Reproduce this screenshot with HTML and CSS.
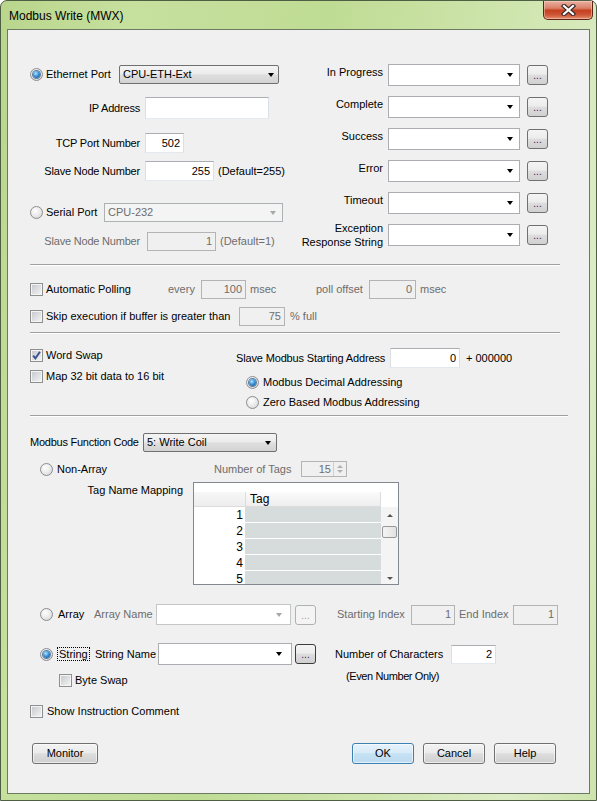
FILE: index.html
```html
<!DOCTYPE html>
<html lang="en">

<head>
    <meta charset="UTF-8">
    <meta name="viewport" content="width=device-width, initial-scale=1.0">
    <link rel="stylesheet" href="styles.css">
    <title>Modbus Write (MWX)</title>
</head>

<body>
    <div class="window">
        <div class="titlebar">
            <span class="title">Modbus Write (MWX)</span>
            <span class="close">
                <svg width="15" height="12" viewBox="0 0 15 12">
                    <path d="M3 2 L12 10 M12 2 L3 10" stroke="#3a2b2b" stroke-width="4.4" stroke-linecap="square" fill="none"/>
                    <path d="M3 2 L12 10 M12 2 L3 10" stroke="#fff" stroke-width="2.2" stroke-linecap="square" fill="none"/>
                </svg>
            </span>
        </div>

        <div class="client">
            <!-- Port settings and status bits -->
            <div class="ports">
                <div class="port-col">
                    <div class="row eth-row">
                        <span class="radio on"></span>
                        <span class="opt eth-lbl">Ethernet Port</span>
                        <div class="combo raised eth-combo"><span>CPU-ETH-Ext</span><i class="arrow"></i></div>
                    </div>
                    <div class="row ip-row">
                        <label class="lbl">IP Address</label>
                        <div class="field ip-field"></div>
                    </div>
                    <div class="row tcp-row">
                        <label class="lbl">TCP Port Number</label>
                        <div class="field num tcp-field">502</div>
                    </div>
                    <div class="row node-row">
                        <label class="lbl">Slave Node Number</label>
                        <div class="field num node-field">255</div>
                        <span class="note">(Default=255)</span>
                    </div>
                    <div class="row serial-row">
                        <span class="radio"></span>
                        <span class="opt serial-lbl">Serial Port</span>
                        <div class="combo off serial-combo"><span>CPU-232</span><i class="arrow"></i></div>
                    </div>
                    <div class="row node2-row dim">
                        <label class="lbl">Slave Node Number</label>
                        <div class="field num off node2-field">1</div>
                        <span class="note">(Default=1)</span>
                    </div>
                </div>

                <div class="bits-col">
                    <div class="bit-row">
                        <label class="bit-lbl">In Progress</label>
                        <div class="combo bit-combo"><i class="arrow"></i></div>
                        <span class="dots">...</span>
                    </div>
                    <div class="bit-row">
                        <label class="bit-lbl">Complete</label>
                        <div class="combo bit-combo"><i class="arrow"></i></div>
                        <span class="dots">...</span>
                    </div>
                    <div class="bit-row">
                        <label class="bit-lbl">Success</label>
                        <div class="combo bit-combo"><i class="arrow"></i></div>
                        <span class="dots">...</span>
                    </div>
                    <div class="bit-row">
                        <label class="bit-lbl">Error</label>
                        <div class="combo bit-combo"><i class="arrow"></i></div>
                        <span class="dots">...</span>
                    </div>
                    <div class="bit-row">
                        <label class="bit-lbl">Timeout</label>
                        <div class="combo bit-combo"><i class="arrow"></i></div>
                        <span class="dots">...</span>
                    </div>
                    <div class="bit-row">
                        <label class="bit-lbl two-line">Exception<br>Response String</label>
                        <div class="combo bit-combo"><i class="arrow"></i></div>
                        <span class="dots">...</span>
                    </div>
                </div>
            </div>

            <hr class="sep sep-top">

            <!-- Polling -->
            <div class="poll">
                <div class="row poll-row">
                    <label class="chk poll-chk"><span class="check"></span>Automatic Polling</label>
                    <span class="dim every-lbl">every</span>
                    <div class="field num off every-field">100</div>
                    <span class="dim msec-lbl">msec</span>
                    <span class="dim offset-lbl">poll offset</span>
                    <div class="field num off offset-field">0</div>
                    <span class="dim msec2-lbl">msec</span>
                </div>
                <div class="row skip-row">
                    <label class="chk skip-chk"><span class="check"></span>Skip execution if buffer is greater than</label>
                    <div class="field num off skip-field">75</div>
                    <span class="dim full-lbl">% full</span>
                </div>
            </div>

            <hr class="sep sep-mid">

            <!-- Addressing -->
            <div class="swap">
                <div class="swap-left">
                    <label class="chk swap-chk">
                        <span class="check on"><svg width="11" height="11" viewBox="0 0 11 11"><path d="M2.2 5.6 L4.4 8.4 L9 1.8" stroke="#3d5191" stroke-width="1.9" fill="none"/></svg></span>Word Swap
                    </label>
                    <label class="chk map-chk"><span class="check"></span>Map 32 bit data to 16 bit</label>
                </div>
                <div class="swap-right">
                    <div class="row addr-row">
                        <label class="addr-lbl">Slave Modbus Starting Address</label>
                        <div class="field num addr-field">0</div>
                        <span class="plus">+ 000000</span>
                    </div>
                    <label class="opt-row dec-row"><span class="radio on"></span>Modbus Decimal Addressing</label>
                    <label class="opt-row zero-row"><span class="radio"></span>Zero Based Modbus Addressing</label>
                </div>
            </div>

            <hr class="sep sep-low">

            <!-- Function code and tags -->
            <div class="func">
                <div class="row fc-row">
                    <label class="fc-lbl">Modbus Function Code</label>
                    <div class="combo raised fc-combo"><span>5: Write Coil</span><i class="arrow"></i></div>
                </div>

                <div class="row na-row">
                    <span class="radio"></span>
                    <span class="na-lbl">Non-Array</span>
                    <span class="dim tags-lbl">Number of Tags</span>
                    <div class="spin">
                        <span class="spin-val">15</span>
                        <span class="spin-btns"><i class="up"></i><i class="down"></i></span>
                    </div>
                </div>

                <div class="row map-row">
                    <label class="map-lbl">Tag Name Mapping</label>
                    <div class="grid">
                        <div class="ghead">
                            <div class="gh-num"></div>
                            <div class="gh-tag"><span>Tag</span></div>
                            <div class="gh-blank"></div>
                        </div>
                        <div class="gbody">
                            <div class="gnums">
                                <div>1</div><div>2</div><div>3</div><div>4</div><div>5</div>
                            </div>
                            <div class="gtags">
                                <div></div><div></div><div></div><div></div><div></div>
                            </div>
                            <div class="gscroll">
                                <span class="sb-btn"><i class="sb-up"></i></span>
                                <span class="sb-thumb"></span>
                                <span class="sb-btn sb-end"><i class="sb-down"></i></span>
                            </div>
                        </div>
                    </div>
                </div>

                <div class="row arr-row">
                    <span class="radio"></span>
                    <span class="arr-lbl">Array</span>
                    <span class="dim arrname-lbl">Array Name</span>
                    <div class="combo arr-combo"><i class="arrow grey"></i></div>
                    <span class="dots off">...</span>
                    <span class="dim start-lbl">Starting Index</span>
                    <div class="field num off idx-field">1</div>
                    <span class="dim end-lbl">End Index</span>
                    <div class="field num off end-field">1</div>
                </div>

                <div class="row str-row">
                    <span class="radio on"></span>
                    <span class="str-lbl"><span class="focus">String</span></span>
                    <span class="strname-lbl">String Name</span>
                    <div class="combo str-combo"><i class="arrow"></i></div>
                    <span class="dots focus-btn">...</span>
                    <span class="chars-lbl">Number of Characters</span>
                    <div class="field num chars-field">2</div>
                </div>

                <div class="row byte-row">
                    <label class="chk byte-chk"><span class="check"></span>Byte Swap</label>
                    <span class="even-lbl">(Even Number Only)</span>
                </div>
            </div>

            <label class="chk show-chk"><span class="check"></span>Show Instruction Comment</label>

            <div class="actions">
                <button class="btn monitor-btn">Monitor</button>
                <button class="btn default ok-btn">OK</button>
                <button class="btn cancel-btn">Cancel</button>
                <button class="btn help-btn">Help</button>
            </div>
        </div>
    </div>
</body>

</html>
```

FILE: styles.css
```css
* {
  box-sizing: border-box;
}

body {
  margin: 0;
  font-family: "Liberation Sans", Arial, sans-serif;
  font-size: 11px;
  line-height: 13px;
  color: #000;
  background: #fff;
  white-space: nowrap;
}

/* window frame */
.window {
  width: 597px;
  height: 801px;
  padding: 0 6px 6px;
  border: 1px solid #4f5f43;
  border-radius: 7px 7px 0 0;
  background: linear-gradient(100deg, #b9d68c 0%, #c6e09e 18%, #bfdc94 45%, #cfe5ae 70%, #dcecc5 88%, #cde3ac 100%);
}

.titlebar {
  height: 28px;
  display: flex;
  justify-content: space-between;
  align-items: flex-start;
}

.title {
  padding: 8px 0 0 2px;
  font-size: 12px;
  line-height: 15px;
}

.close {
  width: 50px;
  height: 19px;
  margin-right: -3px;
  border: 1px solid #5c2418;
  border-top: 0;
  border-radius: 0 0 5px 5px;
  background: linear-gradient(#eab0a2, #d98068 40%, #c4401f 52%, #cf5737 78%, #e3916f);
  box-shadow: inset 0 0 0 1px rgba(255, 220, 210, 0.45);
  display: flex;
  align-items: center;
  justify-content: center;
}

.client {
  height: 765px;
  border: 1px solid #6c7a62;
  background: #f0f0f0;
  padding-left: 22px;
}

/* shared controls */
.row {
  display: flex;
  align-items: center;
}

.dim {
  color: #6d6d6d;
}

.field {
  display: flex;
  align-items: center;
  padding: 0 3px;
  border: 1px solid #abadb3;
  border-color: #abadb3 #dbdfe6 #e3e9ef #dbdfe6;
  background: #fff;
  flex: none;
}

.field.num {
  justify-content: flex-end;
}

.field.off {
  background: #f0f0f0;
  border-color: #b4b4b4;
  color: #6d6d6d;
}

.combo {
  display: flex;
  align-items: center;
  padding-left: 3px;
  border: 1px solid #abadb3;
  background: #fff;
  flex: none;
}

.combo.raised {
  border-color: #707070;
  border-radius: 2px;
  background: linear-gradient(#f4f4f4, #ececec 45%, #dfdfdf 52%, #d3d3d3);
}

.combo.off {
  background: #f4f4f4;
  border-color: #adb2b5;
  color: #6d6d6d;
}

.arrow {
  margin-left: auto;
  margin-right: 6px;
  width: 0;
  height: 0;
  border-left: 3.5px solid transparent;
  border-right: 3.5px solid transparent;
  border-top: 4px solid #000;
}

.combo.off .arrow,
.arrow.grey {
  border-top-color: #a7a7a7;
}

.dots {
  width: 21px;
  height: 20px;
  border: 1px solid #707070;
  border-radius: 3px;
  background: linear-gradient(#f4f4f4, #ececec 45%, #dddddd 52%, #d0d0d0);
  display: flex;
  align-items: flex-end;
  justify-content: center;
  padding-bottom: 3px;
  font-size: 10px;
  line-height: 10px;
  color: #2c1e63;
  flex: none;
}

.dots.off {
  border-color: #adb2b5;
  background: #f4f4f4;
  color: #a0a0a0;
}

.radio {
  width: 13px;
  height: 13px;
  border-radius: 50%;
  border: 1px solid #8a8d92;
  background: radial-gradient(circle at 40% 35%, #ffffff 0, #ececec 45%, #cfcfcf 100%);
  display: flex;
  align-items: center;
  justify-content: center;
  flex: none;
}

.radio.on::after {
  content: "";
  width: 7px;
  height: 7px;
  border-radius: 50%;
  background: radial-gradient(circle at 40% 35%, #b4e6ff 0, #3d95da 45%, #0f3f7c 100%);
  box-shadow: 0 0 0 1px #5f7d9c;
}

.chk {
  display: flex;
  align-items: center;
}

.check {
  width: 13px;
  height: 13px;
  margin-right: 3px;
  border: 1px solid #8e8f8f;
  background: linear-gradient(135deg, #c3c6ca, #f6f6f6);
  box-shadow: inset 0 0 0 1px #f4f4f4;
  display: flex;
  align-items: center;
  justify-content: center;
  flex: none;
}

.sep {
  height: 2px;
  margin: 0;
  border: 0;
  border-top: 1px solid #a0a0a0;
  border-bottom: 1px solid #fff;
}

/* ports */
.ports {
  display: flex;
  margin-top: 34px;
}

.port-col {
  width: 270px;
}

.port-col .radio {
  margin-right: 3px;
}

.eth-row { margin-top: 1px; height: 19px; }
.ip-row { margin-top: 13px; height: 22px; }
.tcp-row { margin-top: 14px; height: 20px; }
.node-row { margin-top: 8px; height: 20px; }
.serial-row { margin-top: 22px; height: 19px; }
.node2-row { margin-top: 10px; height: 19px; }

.eth-lbl { width: 73px; }
.serial-lbl { width: 58px; }

.eth-combo { width: 160px; height: 19px; }
.eth-combo .arrow { margin-right: 4px; }
.serial-combo { width: 179px; height: 19px; }
.serial-combo .arrow { margin-right: 6px; }

.lbl {
  width: 110px;
  margin-right: 5px;
  text-align: right;
  letter-spacing: -0.2px;
}

.ip-field { width: 124px; height: 22px; }
.tcp-field { width: 39px; height: 20px; }
.node-field { width: 69px; height: 20px; }
.node2-field { width: 69px; height: 19px; margin-left: 2px; }

.note {
  margin-left: 4px;
}

.bits-col {
  display: flex;
  flex-direction: column;
  gap: 10px;
}

.bit-row {
  display: flex;
  align-items: center;
  height: 22px;
}

.bit-lbl {
  width: 83px;
  margin-right: 5px;
  padding-top: 2px;
  text-align: right;
  align-self: flex-start;
}

.bit-lbl.two-line {
  align-self: center;
  padding-top: 0;
  line-height: 14px;
  margin-top: -1px;
}

.bit-combo { width: 132px; height: 22px; }
.bit-combo .arrow { margin-right: 6px; }

.bit-row .dots {
  margin-left: 7px;
}

.sep-top { margin-top: 13px; width: 530px; }

/* polling */
.poll-row { margin-top: 14px; height: 19px; }
.skip-row { margin-top: 8px; height: 19px; }

.poll-chk { width: 138px; }
.every-lbl { width: 33px; }
.every-field { width: 45px; height: 19px; }
.msec-lbl { width: 66px; margin-left: 4px; }
.offset-lbl { width: 53px; }
.offset-field { width: 47px; height: 19px; }
.msec2-lbl { margin-left: 4px; }

.skip-chk { width: 209px; }
.skip-field { width: 46px; height: 19px; }
.full-lbl { margin-left: 5px; }

.sep-mid { margin-top: 6px; width: 530px; }

/* addressing */
.swap {
  display: flex;
}

.swap-left {
  width: 206px;
}

.swap-chk { margin-top: 15px; height: 13px; }
.map-chk { margin-top: 8px; height: 13px; }

.addr-row { margin-top: 14px; height: 20px; }
.addr-lbl { width: 154px; letter-spacing: -0.15px; }
.addr-field { width: 70px; height: 20px; }
.plus { margin-left: 6px; }

.opt-row {
  display: flex;
  align-items: center;
  height: 13px;
  padding-left: 10px;
}

.opt-row .radio {
  margin-right: 4px;
}

.dec-row { margin-top: 8px; }
.zero-row { margin-top: 7px; }

.sep-low { margin-top: 6px; width: 538px; }

/* function code */
.fc-row { margin-top: 16px; height: 19px; }
.fc-lbl { width: 113px; letter-spacing: -0.25px; }
.fc-combo { width: 134px; height: 19px; }
.fc-combo .arrow { margin-right: 5px; }

.na-row { margin-top: 9px; height: 16px; }
.na-row .radio { margin: 0 4px 0 10px; }
.na-lbl { width: 157px; }
.tags-lbl { width: 87px; }

.spin {
  width: 46px;
  height: 16px;
  display: flex;
  border: 1px solid #b4b4b4;
  background: #f0f0f0;
  color: #6d6d6d;
}

.spin-val {
  flex: 1;
  text-align: right;
  padding-right: 2px;
  line-height: 14px;
}

.spin-btns {
  width: 13px;
  display: flex;
  flex-direction: column;
  align-items: center;
  justify-content: space-around;
  border-left: 1px solid #cfcfcf;
  padding: 2px 0;
}

.spin-btns i {
  width: 0;
  height: 0;
  border-left: 3px solid transparent;
  border-right: 3px solid transparent;
}

.spin-btns .up { border-bottom: 3px solid #b0b0b0; }
.spin-btns .down { border-top: 3px solid #b0b0b0; }

.map-row {
  margin-top: 5px;
  align-items: flex-start;
}

.map-lbl {
  width: 153px;
  margin-right: 10px;
  padding-top: 2px;
  text-align: right;
}

.grid {
  width: 206px;
  height: 103px;
  border: 1px solid #828790;
  background: #fff;
  display: flex;
  flex-direction: column;
  overflow: hidden;
}

.ghead {
  height: 24px;
  display: flex;
  flex: none;
}

.gh-num {
  width: 51px;
  background: linear-gradient(#fff 9px, #f7f7f7 9px, #ededed);
  border-bottom: 1px solid #dcdcdc;
}

.gh-tag {
  width: 136px;
  padding-top: 9px;
  background: #fff;
}

.gh-tag span {
  display: block;
  height: 15px;
  padding: 1px 0 0 4px;
  border-left: 1px solid #dcdcdc;
  border-right: 1px solid #dcdcdc;
  border-bottom: 1px solid #dcdcdc;
  background: linear-gradient(#fbfbfb, #eeeeee);
  font-size: 12px;
}

.gh-blank {
  flex: 1;
}

.gbody {
  display: flex;
  flex: 1;
}

.gnums {
  width: 51px;
}

.gnums div {
  height: 16px;
  padding: 2px 2px 0 0;
  text-align: right;
  font-size: 12px;
}

.gtags {
  width: 136px;
}

.gtags div {
  height: 16px;
  background: #d6dbdb;
  border-bottom: 1px solid #fff;
}

.gscroll {
  width: 17px;
  display: flex;
  flex-direction: column;
  align-items: center;
  background: #f4f4f4;
}

.sb-btn {
  height: 17px;
  display: flex;
  align-items: center;
  justify-content: center;
}

.sb-end {
  margin-top: auto;
}

.sb-up,
.sb-down {
  width: 0;
  height: 0;
  border-left: 3px solid transparent;
  border-right: 3px solid transparent;
}

.sb-up { border-bottom: 3px solid #555; }
.sb-down { border-top: 3px solid #555; }

.sb-thumb {
  width: 15px;
  height: 12px;
  margin-top: 2px;
  border: 1px solid #979797;
  border-radius: 2px;
  background: linear-gradient(90deg, #f4f4f4, #e2e2e2);
}

/* array / string rows */
.arr-row { margin-top: 19px; height: 21px; }
.str-row { margin-top: 18px; height: 22px; }

.arr-row .radio,
.str-row .radio {
  margin: 0 5px 0 10px;
}

.arr-lbl { width: 36px; }
.arrname-lbl { width: 62px; }
.arr-combo { width: 135px; height: 21px; border-color: #c4c7ca; }
.arr-combo .arrow { margin-right: 8px; }
.arr-row .dots { margin-left: 4px; }
.start-lbl { width: 74px; margin-left: 21px; }
.idx-field { width: 44px; height: 20px; }
.end-lbl { width: 54px; margin-left: 4px; }
.end-field { width: 45px; height: 20px; }

.str-lbl { width: 37px; }

.focus {
  outline: 1px dotted #000;
  padding: 0 1px;
}

.strname-lbl { width: 63px; }
.str-combo { width: 134px; height: 22px; }
.str-combo .arrow { margin-right: 9px; }

.focus-btn {
  margin-left: 3px;
  border-color: #3c3c3c;
}

.chars-lbl { width: 116px; margin-left: 19px; }
.chars-field { width: 45px; height: 19px; }

.byte-row {
  margin-top: 5px;
  align-items: flex-start;
}

.byte-chk {
  width: 287px;
  margin: 4px 0 0 29px;
  height: 13px;
}

.even-lbl {
  letter-spacing: -0.4px;
}

.show-chk {
  margin-top: 18px;
  height: 13px;
}

.show-chk .check {
  margin-right: 4px;
}

/* buttons */
.actions {
  display: flex;
  margin-top: 25px;
}

.btn {
  height: 21px;
  width: 62px;
  padding: 0;
  border: 1px solid #707070;
  border-radius: 3px;
  background: linear-gradient(#f3f3f3, #ebebeb 45%, #dddddd 52%, #cfcfcf);
  box-shadow: inset 0 0 0 1px rgba(255, 255, 255, 0.6);
  font: inherit;
  color: #000;
}

.btn.default {
  border-color: #3c7fb1;
  background: linear-gradient(#e5f2fb, #d8ebf8 45%, #c6e1f3 52%, #bcdaf0);
}

.monitor-btn { width: 66px; margin-left: 2px; }
.ok-btn { margin-left: 254px; }
.cancel-btn { margin-left: 9px; }
.help-btn { margin-left: 9px; }
```
